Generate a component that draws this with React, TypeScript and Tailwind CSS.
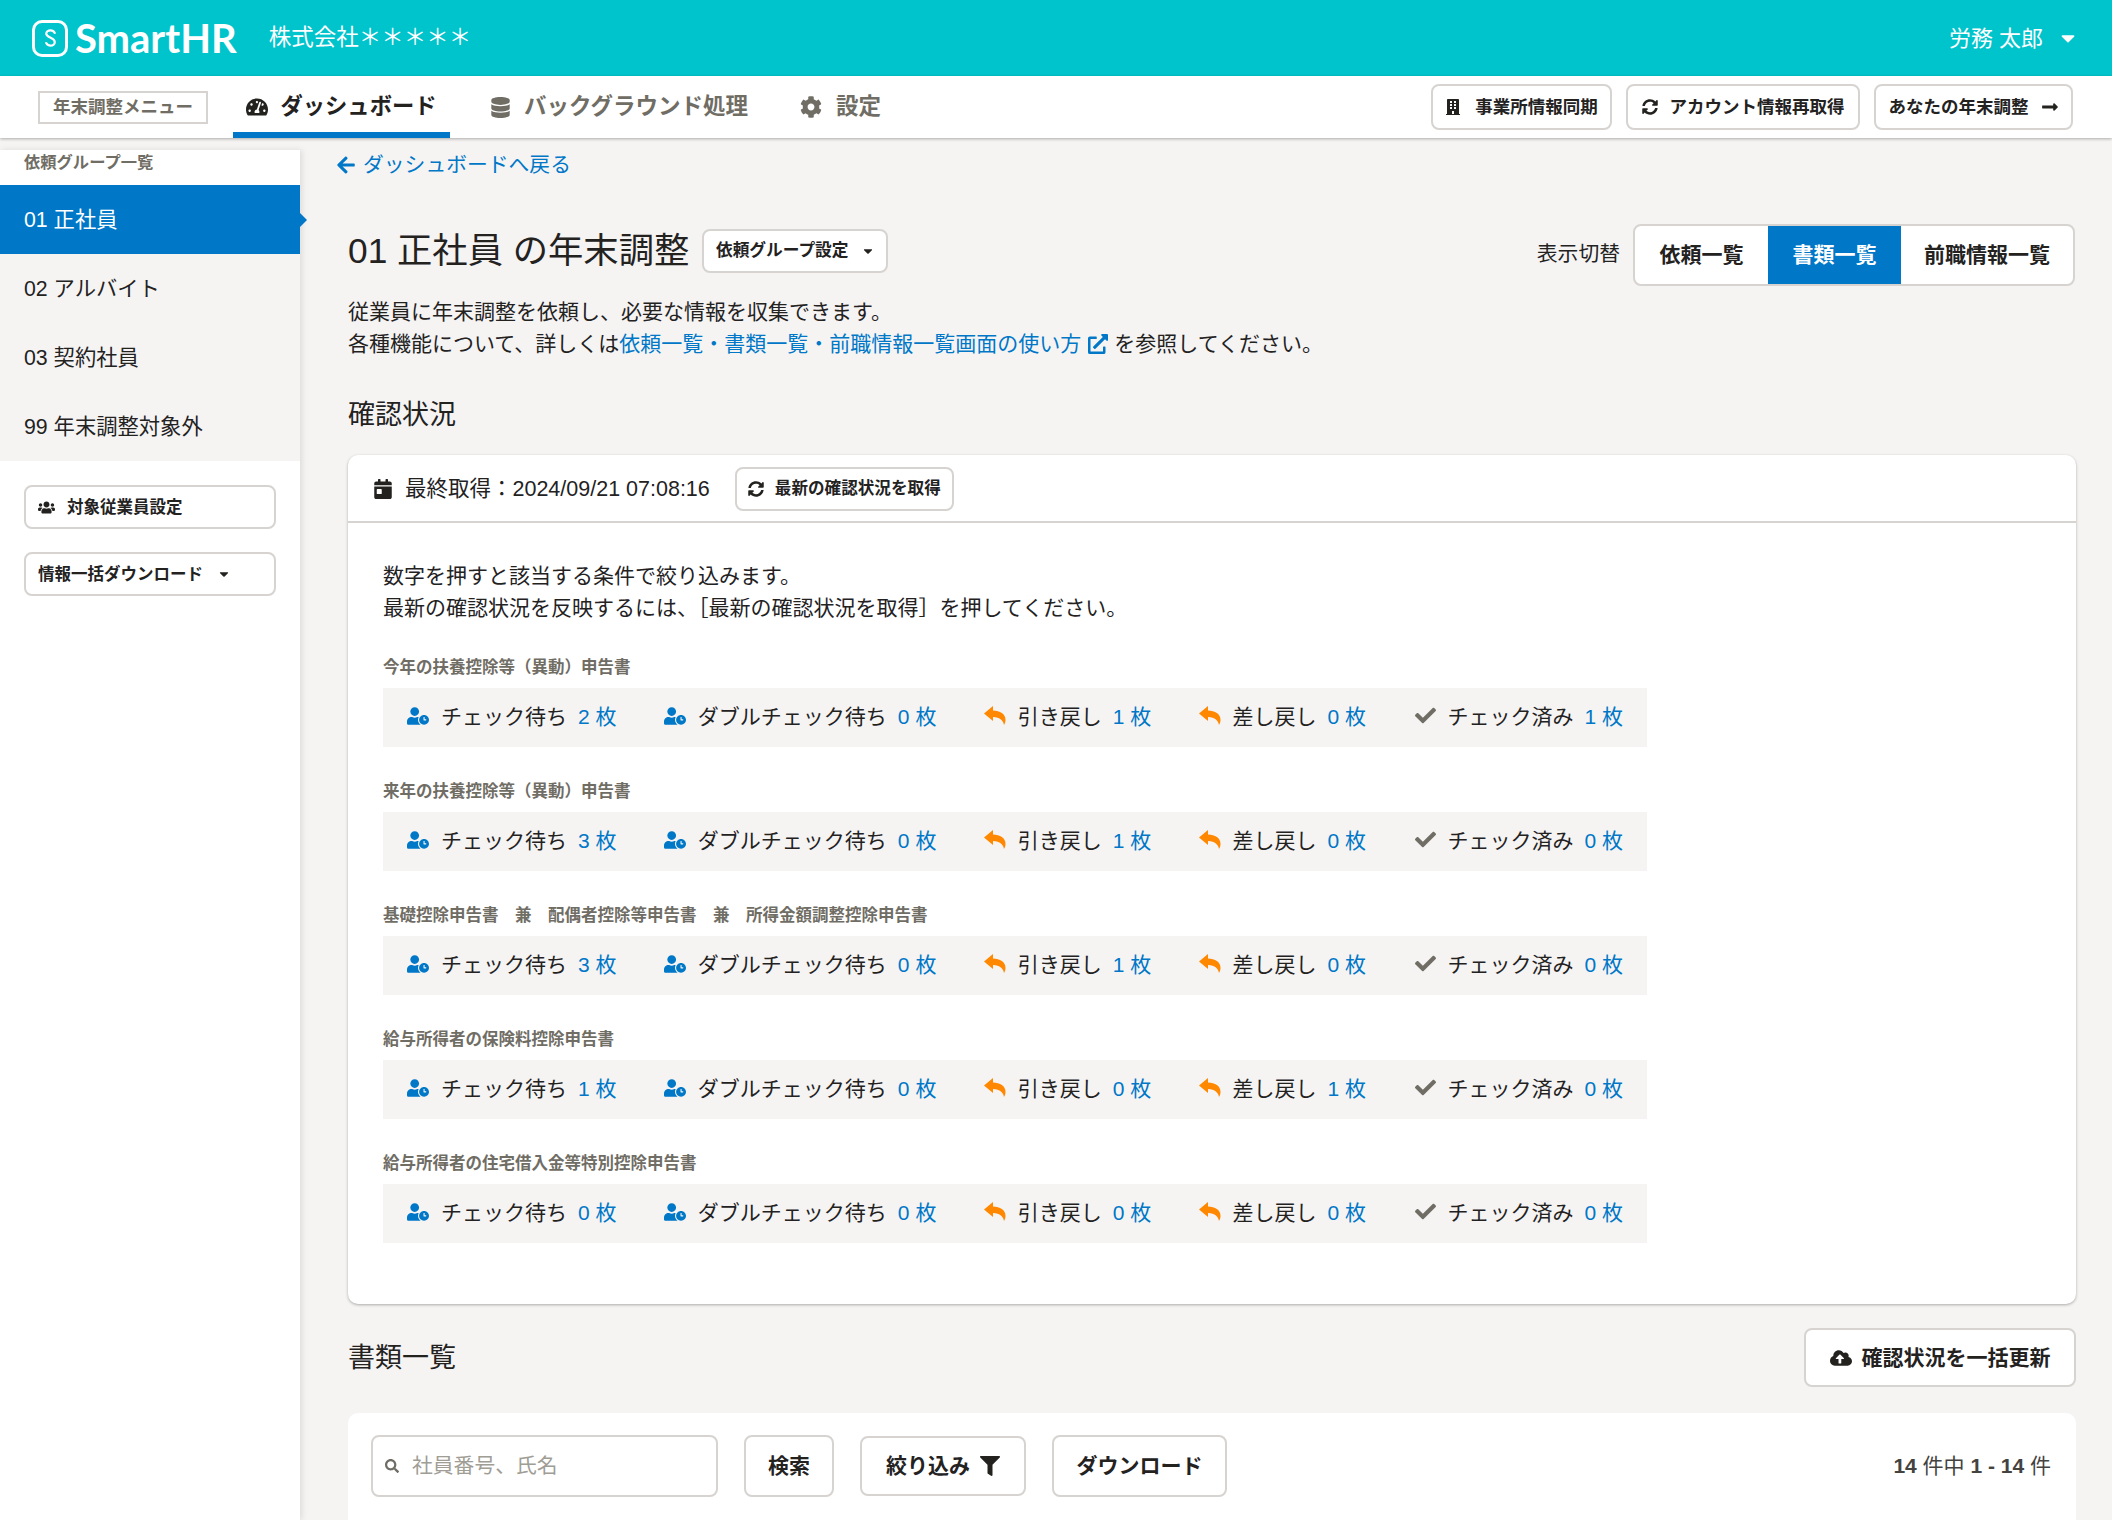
import { ReactNode } from "react";
import {
  FaArrowLeft,
  FaBuilding,
  FaCalendarDay,
  FaCaretDown,
  FaCheck,
  FaCloudUploadAlt,
  FaCog,
  FaDatabase,
  FaExternalLinkAlt,
  FaFilter,
  FaLongArrowAltRight,
  FaSearch,
  FaSyncAlt,
  FaTachometerAlt,
  FaUserClock,
  FaUsers,
} from "react-icons/fa";

const sections = [
  { title: "今年の扶養控除等（異動）申告書", counts: [2, 0, 1, 0, 1] },
  { title: "来年の扶養控除等（異動）申告書", counts: [3, 0, 1, 0, 0] },
  { title: "基礎控除申告書　兼　配偶者控除等申告書　兼　所得金額調整控除申告書", counts: [3, 0, 1, 0, 0] },
  { title: "給与所得者の保険料控除申告書", counts: [1, 0, 0, 1, 0] },
  { title: "給与所得者の住宅借入金等特別控除申告書", counts: [0, 0, 0, 0, 0] },
];

function ReplyIcon() {
  return (
    <svg viewBox="0 0 22 19" className="w-[22px] h-[19px] -translate-y-[1px]" fill="#ff8800">
      <path d="M0 7.5 9 0v4.5c7 0 12.5 3.5 12.5 9.5 0 1.8-.5 3.5-1.5 5-.5-4-4-8-11-8v4z" />
    </svg>
  );
}

const statuses = [
  { label: "チェック待ち", icon: <FaUserClock className="text-[#0077c7] text-[22px] -translate-y-[1px]" /> },
  { label: "ダブルチェック待ち", icon: <FaUserClock className="text-[#0077c7] text-[22px] -translate-y-[1px]" /> },
  { label: "引き戻し", icon: <ReplyIcon /> },
  { label: "差し戻し", icon: <ReplyIcon /> },
  { label: "チェック済み", icon: <FaCheck className="text-[#706d65] text-[21px] -translate-y-[1px] translate-x-[2px]" /> },
];

function Btn({ children, className = "" }: { children: ReactNode; className?: string }) {
  return (
    <button
      className={`flex items-center justify-center bg-white border-2 border-[#d6d3d0] rounded-[8px] font-bold text-[#23221f] whitespace-nowrap ${className}`}
    >
      {children}
    </button>
  );
}

function Header() {
  return (
    <header className="h-[76px] bg-[#00c4cc] flex items-center pl-[32px] pr-[33px] text-white">
      <div className="w-[36px] h-[37px] rounded-[10px] border-[3px] border-white flex items-center justify-center">
        <svg viewBox="0 0 20 24" className="w-[17px] h-[24px]" fill="none" stroke="white" strokeWidth="2.6" strokeLinecap="round">
          <path d="M15 6c-1-2-3-3-5-3-3 0-5 2-5 4 0 5 10 4 10 10 0 2-2 4-5 4-2 0-4-1-5-3" />
        </svg>
      </div>
      <span className="ml-[7px] font-['Lato',sans-serif] font-bold text-[40px] leading-none">SmartHR</span>
      <span className="ml-[32px] text-[22.5px]">株式会社＊＊＊＊＊</span>
      <span className="ml-auto text-[22px]">労務 太郎</span>
      <FaCaretDown className="ml-[14px] text-[22px]" />
    </header>
  );
}

function NavBar() {
  return (
    <nav className="relative z-20 h-[62px] bg-white shadow-[0_1px_3px_rgba(0,0,0,0.3)] flex items-center pl-[38px] pr-[39px]">
      <div className="w-[170px] h-[33px] border-2 border-[#d6d3d0] flex items-center justify-center text-[17.5px] font-bold text-[#706d65] whitespace-nowrap">
        年末調整メニュー
      </div>
      <div className="ml-[25px] w-[217px] h-full border-b-[6px] border-[#0077c7] pt-[6px] flex items-center justify-center gap-[12px] text-[22.3px] font-bold text-[#23221f]">
        <FaTachometerAlt className="text-[22px]" />
        ダッシュボード
      </div>
      <div className="ml-[40px] flex items-center gap-[13px] text-[22.5px] font-bold text-[#706d65]">
        <FaDatabase className="text-[21px]" />
        バックグラウンド処理
      </div>
      <div className="ml-[52px] flex items-center gap-[14px] text-[22.5px] font-bold text-[#706d65]">
        <FaCog className="text-[22px]" />
        設定
      </div>
      <div className="ml-auto flex gap-[14px]">
        <Btn className="w-[181px] h-[46px] gap-[14px] text-[17.5px]">
          <FaBuilding className="text-[16px]" />
          事業所情報同期
        </Btn>
        <Btn className="w-[234px] h-[46px] gap-[12px] text-[17.5px]">
          <FaSyncAlt className="text-[16px]" />
          アカウント情報再取得
        </Btn>
        <Btn className="w-[199px] h-[46px] gap-[12px] text-[17.5px]">
          あなたの年末調整
          <FaLongArrowAltRight className="text-[18px]" />
        </Btn>
      </div>
    </nav>
  );
}

function Sidebar() {
  const items = ["01 正社員", "02 アルバイト", "03 契約社員", "99 年末調整対象外"];
  return (
    <aside className="relative z-10 mt-[12px] w-[300px] shrink-0 bg-white shadow-[2px_0_6px_rgba(0,0,0,0.1)]">
      <div className="h-[35px] pl-[24px] text-[16.3px] font-bold text-[#706d65] leading-[24px]">
        依頼グループ一覧
      </div>
      <ul className="bg-[#f5f4f3] text-[21.3px] text-[#23221f]">
        {items.map((item, i) => (
          <li
            key={item}
            className={`relative h-[69px] pl-[24px] pt-[2px] flex items-center ${i === 0 ? "bg-[#0077c7] text-white" : ""}`}
          >
            {item}
            {i === 0 && (
              <span className="absolute left-full top-1/2 -translate-y-1/2 border-y-[7px] border-l-[7px] border-y-transparent border-l-[#0077c7]" />
            )}
          </li>
        ))}
      </ul>
      <div className="pt-[24px] pl-[24px] flex flex-col gap-[23px]">
        <Btn className="w-[252px] h-[44px] !justify-start pl-[12px] gap-[12px] text-[16.5px]">
          <FaUsers className="text-[17px]" />
          対象従業員設定
        </Btn>
        <Btn className="w-[252px] h-[44px] !justify-start pl-[12px] gap-[14px] text-[16.5px]">
          情報一括ダウンロード
          <FaCaretDown className="text-[14px]" />
        </Btn>
      </div>
    </aside>
  );
}

function StatusRow({ counts }: { counts: number[] }) {
  return (
    <div className="h-[59px] bg-[#f5f4f3] px-[24px] pb-[2px] flex items-center justify-between text-[21px] text-[#23221f]">
      {statuses.map((s, i) => (
        <div key={s.label} className="flex items-center">
          <span className="w-[34px] flex items-center">{s.icon}</span>
          <span className="whitespace-nowrap">{s.label}</span>
          <span className="ml-[11px] text-[#0077c7] whitespace-nowrap">{counts[i]} 枚</span>
        </div>
      ))}
    </div>
  );
}

function StatusCard() {
  return (
    <section className="bg-white rounded-[10px] shadow-[0_1px_3px_rgba(0,0,0,0.3)]">
      <div className="h-[68px] border-b-2 border-[#d6d3d0] pl-[25px] pt-[2px] flex items-center">
        <FaCalendarDay className="text-[20px] text-[#23221f]" />
        <span className="ml-[12px] text-[21.5px] text-[#23221f]">最終取得：2024/09/21 07:08:16</span>
        <Btn className="ml-[25px] w-[219px] h-[44px] gap-[11px] text-[16.6px]">
          <FaSyncAlt className="text-[16px]" />
          最新の確認状況を取得
        </Btn>
      </div>
      <div className="px-[35px] pt-[37px] pb-[61px]">
        <div className="text-[21px] leading-[31.5px] text-[#23221f]">
          <p>数字を押すと該当する条件で絞り込みます。</p>
          <p>最新の確認状況を反映するには、［最新の確認状況を取得］を押してください。</p>
        </div>
        <div className="mt-[31px] w-[1264px] flex flex-col gap-[31px]">
          {sections.map((s) => (
            <div key={s.title}>
              <h3 className="h-[34px] pt-[1px] leading-[24px] text-[16.5px] font-bold text-[#706d65]">{s.title}</h3>
              <StatusRow counts={s.counts} />
            </div>
          ))}
        </div>
      </div>
    </section>
  );
}

export default function App() {
  return (
    <div className="w-[2112px] h-[1520px] overflow-hidden bg-[#f5f4f3] flex flex-col font-['Liberation_Sans','Noto_Sans_CJK_JP',sans-serif] text-[#23221f]">
      <Header />
      <NavBar />
      <div className="flex flex-1 min-h-0">
        <Sidebar />
        <main className="flex-1 pl-[48px] pr-[36px]">
          <a className="h-[54px] -ml-[12px] flex items-center gap-[7px] text-[20.8px] text-[#0077c7]">
            <FaArrowLeft className="text-[20px]" />
            ダッシュボードへ戻る
          </a>
          <div className="mt-[32px] flex items-center">
            <div className="flex items-center mb-[8px]">
              <h1 className="text-[35.3px] font-normal leading-[44px] whitespace-nowrap">01 正社員 の年末調整</h1>
              <Btn className="ml-[13px] w-[186px] h-[44px] gap-[12px] text-[16.7px]">
                依頼グループ設定
                <FaCaretDown className="text-[14px]" />
              </Btn>
            </div>
            <span className="ml-auto text-[20.8px] mr-[13px] mb-[2px]">表示切替</span>
            <div className="mr-[1px] h-[62px] flex bg-white border-2 border-[#d6d3d0] rounded-[8px] overflow-hidden text-[21px] font-bold">
              <span className="w-[133px] flex items-center justify-center">依頼一覧</span>
              <span className="w-[133px] flex items-center justify-center bg-[#0077c7] text-white">書類一覧</span>
              <span className="w-[172px] flex items-center justify-center">前職情報一覧</span>
            </div>
          </div>
          <div className="mt-[10px] text-[21px] leading-[32px]">
            <p>従業員に年末調整を依頼し、必要な情報を収集できます。</p>
            <p className="flex items-center">
              各種機能について、詳しくは
              <span className="text-[#0077c7]">依頼一覧・書類一覧・前職情報一覧画面の使い方</span>
              <FaExternalLinkAlt className="ml-[7px] mr-[6px] text-[#0077c7] text-[20px]" />
              を参照してください。
            </p>
          </div>
          <h2 className="mt-[35px] text-[27px] font-normal leading-[40px]">確認状況</h2>
          <div className="mt-[20px]">
            <StatusCard />
          </div>
          <div className="mt-[24px] h-[59px] flex items-center justify-between">
            <h2 className="text-[27px] font-normal leading-[40px]">書類一覧</h2>
            <Btn className="w-[272px] h-[59px] gap-[10px] text-[21px]">
              <FaCloudUploadAlt className="text-[22px]" />
              確認状況を一括更新
            </Btn>
          </div>
          <section className="mt-[26px] bg-white rounded-[10px] h-[140px] pt-[22px] pl-[23px] pr-[25px] flex items-start">
            <div className="w-[347px] h-[62px] border-2 border-[#d6d3d0] rounded-[8px] flex items-center pl-[12px] gap-[13px] text-[20.8px] text-[#a09d95]">
              <FaSearch className="text-[14px] text-[#706d65]" />
              社員番号、氏名
            </div>
            <Btn className="ml-[26px] w-[90px] h-[62px] text-[21px]">検索</Btn>
            <Btn className="ml-[26px] mt-[1px] w-[166px] h-[60px] gap-[10px] text-[21px]">
              絞り込み
              <FaFilter className="text-[20px]" />
            </Btn>
            <Btn className="ml-[26px] w-[175px] h-[62px] text-[21px]">ダウンロード</Btn>
            <span className="ml-auto h-[62px] flex items-center text-[21px] text-[#44433f] whitespace-pre">
              <b>14</b> 件中 <b>1 - 14</b> 件
            </span>
          </section>
        </main>
      </div>
    </div>
  );
}
